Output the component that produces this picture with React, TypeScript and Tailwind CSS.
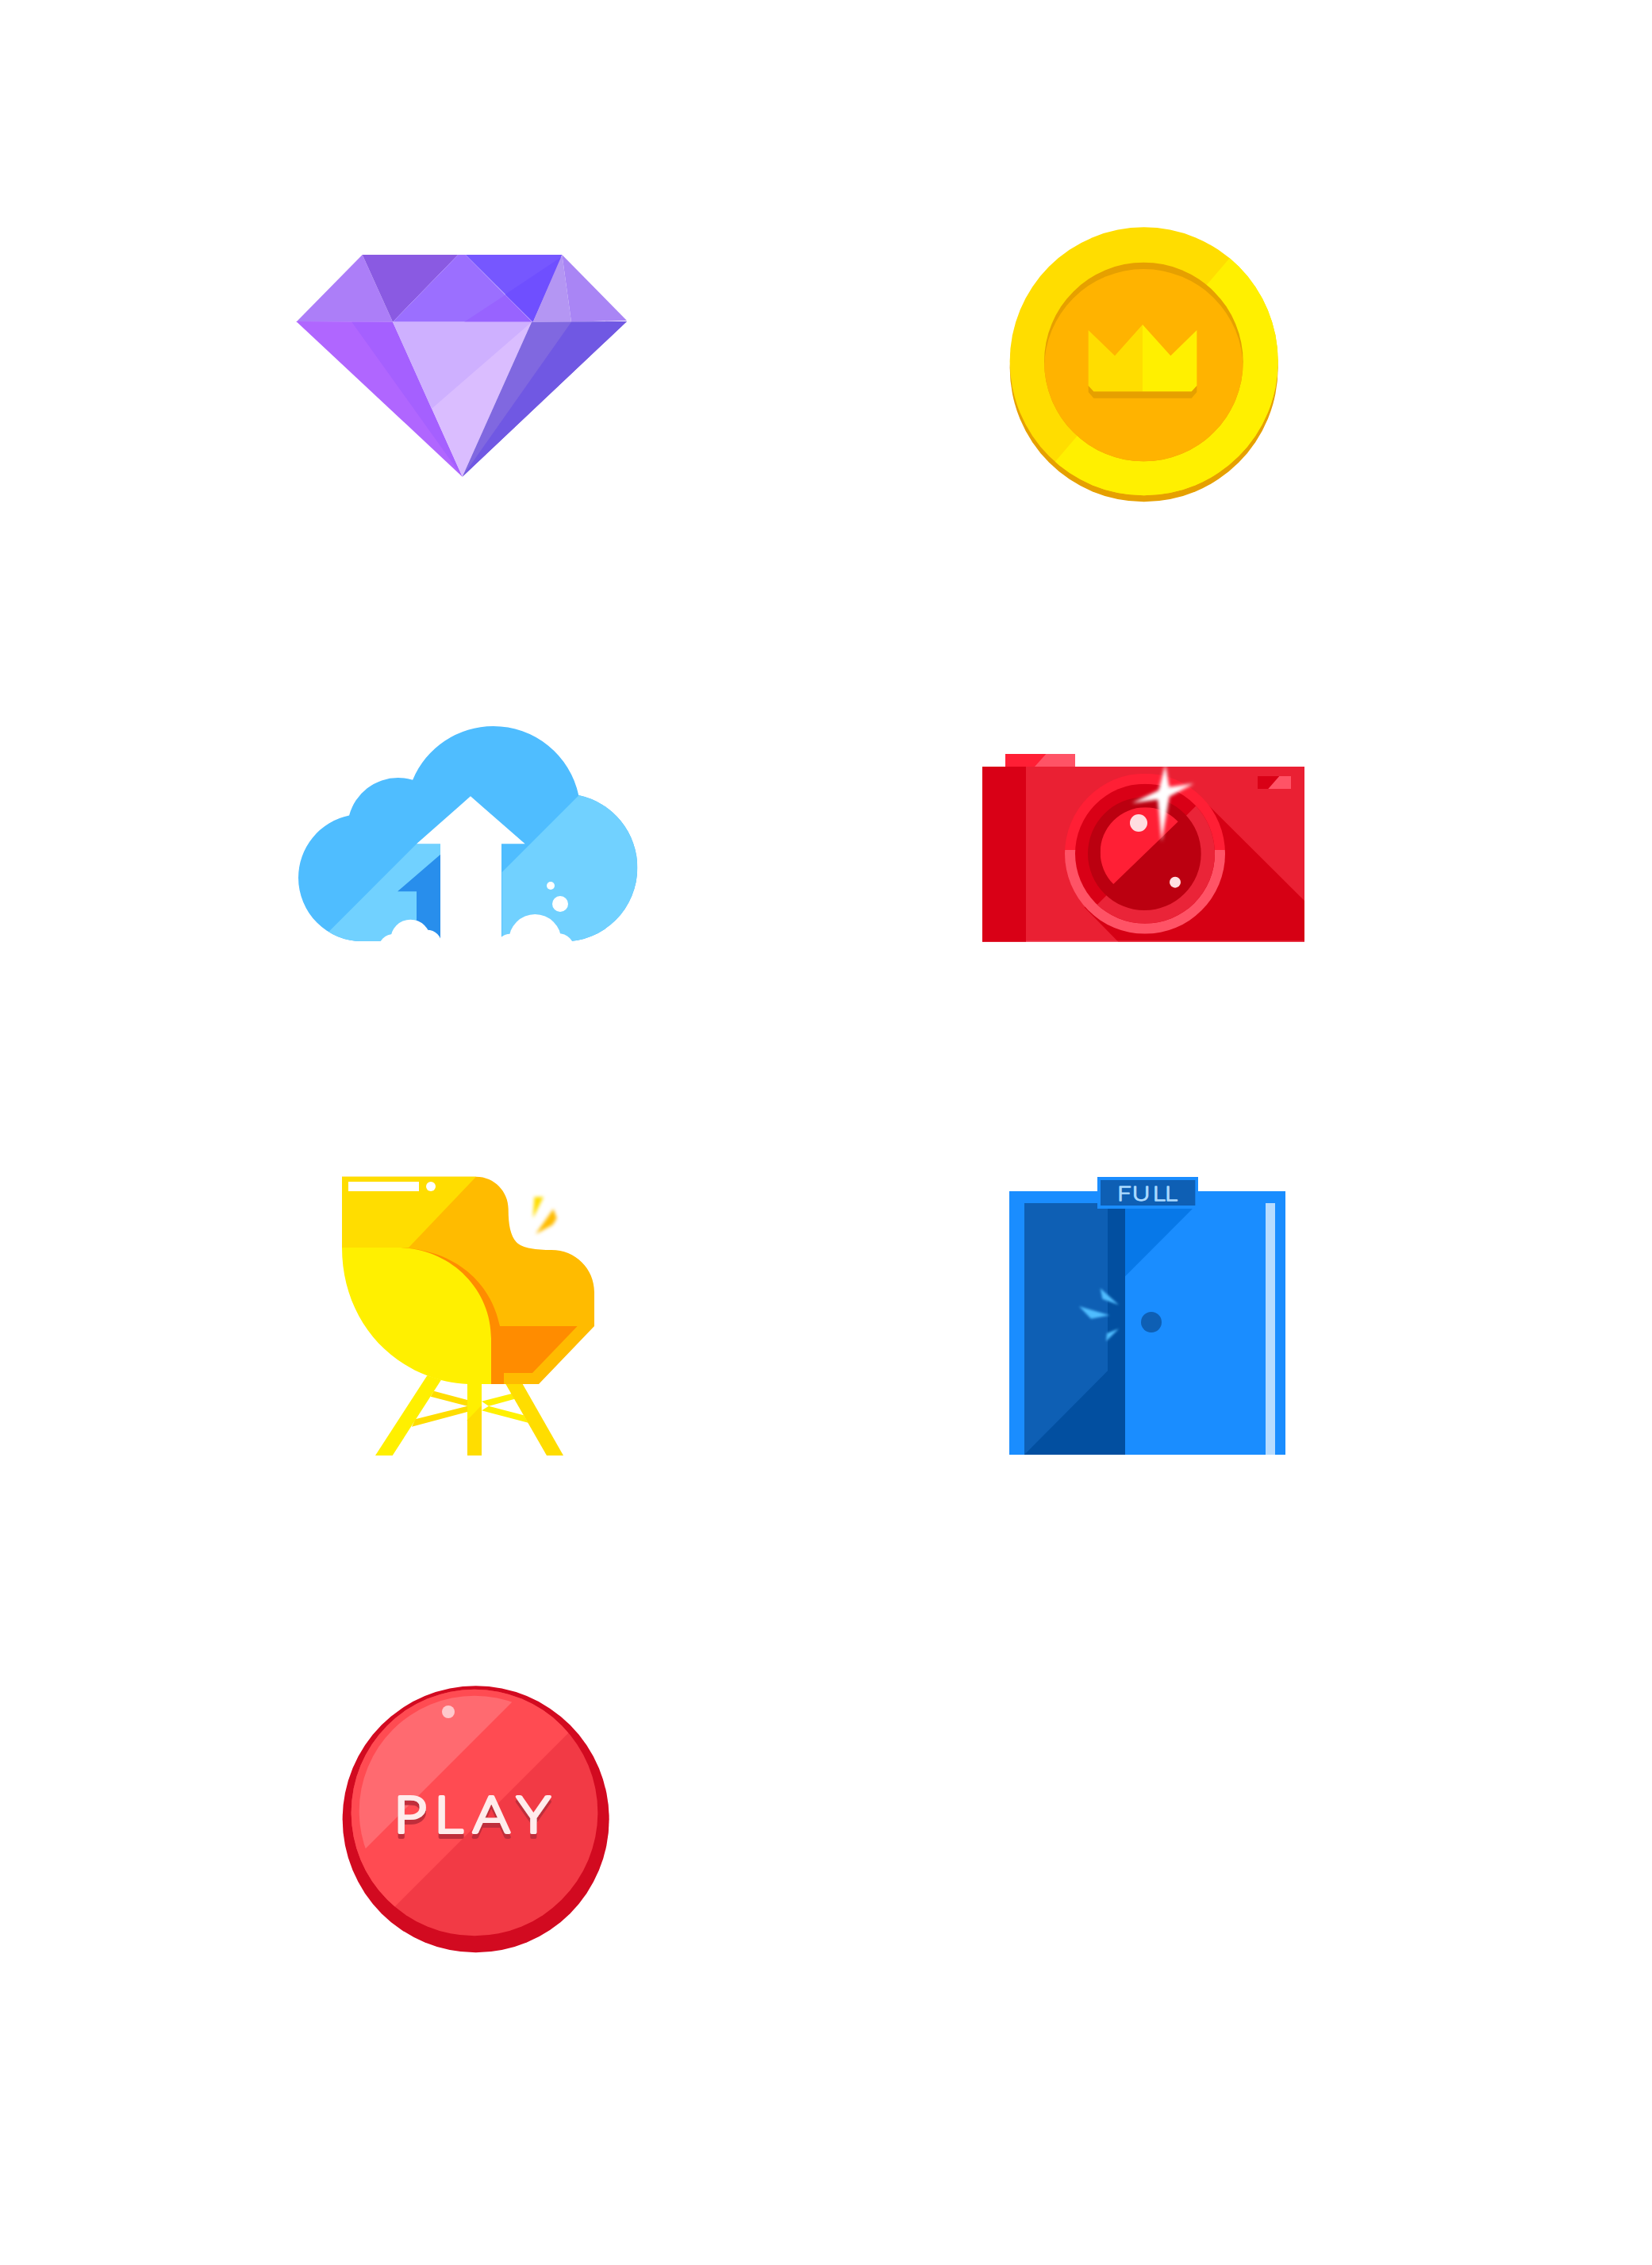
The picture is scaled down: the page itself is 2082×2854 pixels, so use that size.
// Flat game icons. Each svg's viewBox is 3x its rendered size.

function Diamond() {
  return (
    <svg viewBox="0 0 1440 1020" className="block h-[340px] w-[480px]">
      <polygon points="350,93 465,347 100,347" fill="#ac7ef8" />
      <polygon points="350,93 712,93 465,347" fill="#8a5ae2" />
      <polygon points="740,93 1105,93 995,347" fill="#7657ff" />
      <polygon points="465,347 712,93 740,93 992,347" fill="#9b6fff" />
      <polygon points="735,347 890,245 992,347" fill="#9863ff" />
      <polygon points="890,243 1105,100 995,347" fill="#6f4fff" />
      <polygon points="1105,93 1140,347 995,347" fill="#b496f3" />
      <polygon points="1105,93 1350,342 1140,347" fill="#a985f5" />
      <polygon points="100,345 465,347 728,932" fill="#b066ff" />
      <polygon points="310,347 465,347 728,932" fill="#a560ff" />
      <polygon points="465,347 990,347 728,932" fill="#dabdff" />
      <polygon points="465,347 990,347 612,675" fill="#ceb0ff" />
      <polygon points="990,347 1350,345 728,932" fill="#8068e0" />
      <polygon points="1140,347 1350,345 728,932" fill="#7058e3" />
    </svg>
  );
}

function Coin() {
  return (
    <svg viewBox="0 0 1200 1200" className="block h-[400px] w-[400px]">
      <defs>
        <clipPath id="coin-face">
          <circle cx="605" cy="586" r="507" />
        </clipPath>
        <clipPath id="coin-inner">
          <circle cx="604" cy="588" r="376" />
        </clipPath>
      </defs>
      <circle cx="605" cy="610" r="507" fill="#e6a000" />
      <circle cx="605" cy="586" r="507" fill="#ffdd00" />
      <polygon clipPath="url(#coin-face)" points="1028,80 1200,80 1200,1100 154,1100" fill="#fff000" />
      <circle cx="604" cy="588" r="376" fill="#e6a000" />
      <circle clipPath="url(#coin-inner)" cx="604" cy="613" r="376" fill="#ffb300" />
      <polygon points="395,678 415,700 785,700 805,678 805,702 785,725 415,725 395,702" fill="#e6a000" />
      <polygon points="395,468 495,565 600,447 600,700 415,700 395,678" fill="#ffdd00" />
      <polygon points="600,447 706,565 805,468 805,678 785,700 600,700" fill="#fff000" />
    </svg>
  );
}

function CloudShapes() {
  return (
    <>
      <circle cx="815" cy="405" r="330" />
      <circle cx="455" cy="461" r="191" />
      <circle cx="318" cy="648" r="240" />
      <circle cx="1080" cy="610" r="280" />
      <rect x="318" y="400" width="762" height="488" />
    </>
  );
}

function CloudUpload() {
  return (
    <svg viewBox="0 0 1440 960" className="block h-[320px] w-[480px]">
      <defs>
        <clipPath id="cloud-body">
          <CloudShapes />
        </clipPath>
      </defs>
      <g clipPath="url(#cloud-body)">
        <rect width="1440" height="888" fill="#4fbdff" />
        <polygon points="1175,300 848,627 848,960 1440,960 1440,300" fill="#71d1ff" />
        <polygon points="525,520 615,520 615,960 85,960" fill="#71d1ff" />
        <polygon points="615,560 453,700 525,700 525,888 615,888" fill="#288eec" />
      </g>
      <polygon points="729,340 935,520 846,520 846,960 615,960 615,520 525,520" fill="#fff" />
      <g fill="#fff">
        <circle cx="502" cy="881" r="75" />
        <circle cx="440" cy="920" r="60" />
        <circle cx="565" cy="900" r="55" />
        <circle cx="973" cy="885" r="99" />
        <circle cx="880" cy="915" r="55" />
        <circle cx="1060" cy="920" r="62" />
        <circle cx="1032" cy="678" r="15" />
        <circle cx="1068" cy="747" r="30" />
      </g>
    </svg>
  );
}

function Camera() {
  return (
    <svg viewBox="0 0 1380 840" className="block h-[280px] w-[460px]">
      <defs>
        <clipPath id="lens-outer">
          <circle cx="699" cy="437" r="303" />
        </clipPath>
        <clipPath id="lens-ring">
          <circle cx="699" cy="437" r="264" />
        </clipPath>
        <clipPath id="lens-core">
          <circle cx="700" cy="432" r="170" />
        </clipPath>
        <filter id="camera-blur" x="-50%" y="-50%" width="200%" height="200%">
          <feGaussianBlur stdDeviation="6" />
        </filter>
      </defs>
      <rect x="171" y="60" width="264" height="48" fill="#ff1f35" />
      <polygon points="325,60 435,60 435,108 282,108" fill="#ff5366" />
      <rect x="84" y="108" width="1218" height="662" fill="#ea2033" />
      <rect x="84" y="108" width="165" height="662" fill="#d90016" />
      <polygon points="940,255 1302,615 1302,770 598,770 470,640" fill="#d60014" />
      <rect x="249" y="767" width="1053" height="3" fill="#f25060" />
      <rect x="1125" y="144" width="126" height="48" fill="#d90016" />
      <polygon points="1207,144 1251,144 1251,192 1165,192" fill="#ff5366" />
      <g clipPath="url(#lens-outer)">
        <rect x="396" y="134" width="606" height="289" fill="#ff1f35" />
        <rect x="396" y="423" width="606" height="317" fill="#ff5366" />
      </g>
      <g clipPath="url(#lens-ring)">
        <rect x="435" y="173" width="528" height="528" fill="#d90016" />
        <polygon points="963,185 963,701 447,701" fill="#ea2438" />
      </g>
      <circle cx="697" cy="437" r="214" fill="#bb0010" />
      <polygon clipPath="url(#lens-core)" points="530,262 880,262 530,600" fill="#ff1f35" />
      <circle cx="675" cy="321" r="33" fill="#ffdde0" />
      <circle cx="813" cy="545" r="21" fill="#ffe0e3" />
      <g filter="url(#camera-blur)" fill="#fff">
        <polygon points="776,100 794,205 762,392 746,215" />
        <polygon points="650,246 770,188 884,172 778,228" />
      </g>
    </svg>
  );
}

function Chair() {
  return (
    <svg viewBox="0 0 1080 1200" className="block h-[400px] w-[360px]">
      <defs>
        <filter id="chair-blur" x="-50%" y="-50%" width="200%" height="200%">
          <feGaussianBlur stdDeviation="6" />
        </filter>
      </defs>
      <polygon points="410,878 537,912 537,935 398,899" fill="#ffdd00" />
      <polygon points="537,935 537,957 327,1013 340,985" fill="#ffdd00" />
      <polygon points="591,917 705,888 716,908 618,935" fill="#fff000" />
      <polygon points="618,935 750,970 767,998 591,952" fill="#fff000" />
      <polygon points="385,820 438,836 254,1122 189,1122" fill="#fff000" />
      <polygon points="682,852 746,852 900,1122 837,1122" fill="#ffdd00" />
      <rect x="537" y="840" width="54" height="282" fill="#fff000" />
      <polygon points="537,988 591,932 591,1122 537,1122" fill="#ffdd00" />
      <path
        d="M63,68 L570,68 C640,68 692,125 692,190 C692,250 700,290 722,315 C745,340 800,345 855,345 C945,345 1017,415 1017,505 L1017,633 L807,852 L560,852 L300,500 L63,336 Z"
        fill="#ffbb00"
      />
      <polygon points="63,68 570,68 315,336 63,336" fill="#ffdd00" />
      <path
        d="M270,336 C480,340 625,460 660,633 L953,633 L783,810 L675,810 L675,852 L600,852 L600,600 Z"
        fill="#ff8c00"
      />
      <path
        d="M63,336 L270,336 C470,336 627,490 627,680 L627,852 L540,852 C480,850 430,838 385,820 C190,745 63,560 63,336 Z"
        fill="#fff000"
      />
      <rect x="87" y="87" width="267" height="36" fill="#fff" />
      <circle cx="399" cy="105" r="18" fill="#fff" />
      <g filter="url(#chair-blur)">
        <polygon points="790,145 825,145 785,225" fill="#ffdd00" />
        <polygon points="862,190 875,225 860,250 795,285" fill="#ffbb00" />
      </g>
    </svg>
  );
}

function Door() {
  return (
    <svg viewBox="0 0 1200 1200" className="block h-[400px] w-[400px]">
      <defs>
        <filter id="door-blur" x="-50%" y="-50%" width="200%" height="200%">
          <feGaussianBlur stdDeviation="5" />
        </filter>
      </defs>
      <rect x="66" y="123" width="1044" height="996" fill="#1a8dff" />
      <rect x="123" y="168" width="381" height="951" fill="#0e5fb4" />
      <polygon points="123,1119 438,802 438,168 504,168 504,1119" fill="#024fa0" />
      <polygon points="504,180 768,180 504,445" fill="#0778e8" />
      <rect x="1035" y="168" width="36" height="951" fill="#b8dcff" />
      <circle cx="603" cy="618" r="39" fill="#0e5fb4" />
      <g filter="url(#door-blur)" fill="#4fbdff">
        <polygon points="410,490 480,553 418,530" />
        <polygon points="330,558 445,592 375,605" />
        <polygon points="480,643 432,690 435,660" />
      </g>
      <rect x="399" y="69" width="381" height="120" fill="#1a8dff" />
      <rect x="411" y="81" width="358" height="96" fill="#0e5fb4" />
      <text
        x="395 442 507 545"
        y="158"
        transform="scale(1.2 1)"
        fontFamily="Lato, sans-serif"
        fontWeight="300"
        fontSize="78"
        fill="#a8d8ff"
        stroke="#a8d8ff"
        strokeWidth="4"
        strokeLinejoin="round"
      >
        FULL
      </text>
    </svg>
  );
}

function PlayButton() {
  return (
    <svg viewBox="0 0 1140 1140" className="block h-[380px] w-[380px]">
      <defs>
        <clipPath id="play-face">
          <circle cx="564" cy="552" r="466" />
        </clipPath>
        <clipPath id="play-shine">
          <circle cx="564" cy="546" r="436" />
        </clipPath>
        <filter id="play-shadow" x="-10%" y="-20%" width="120%" height="150%">
          <feDropShadow dx="0" dy="18" stdDeviation="0" floodColor="#bf2e3a" />
        </filter>
      </defs>
      <circle cx="569" cy="577" r="504" fill="#d20a20" />
      <circle cx="564" cy="552" r="466" fill="#f23a45" />
      <polygon clipPath="url(#play-face)" points="0,0 1140,0 1140,30 0,1170" fill="#ff4b52" />
      <polygon clipPath="url(#play-shine)" points="0,0 840,0 0,840" fill="#ff6a70" />
      <circle cx="465" cy="171" r="24" fill="#ffc8cc" />
      <text
        x="232 368 498 646"
        y="627"
        transform="scale(1.12 1)"
        filter="url(#play-shadow)"
        fontFamily="Lato, sans-serif"
        fontWeight="300"
        fontSize="190"
        fill="#ffecec"
        stroke="#ffecec"
        strokeWidth="12"
        strokeLinejoin="round"
      >
        PLAY
      </text>
    </svg>
  );
}

export default function App() {
  return (
    <div className="h-[2854px] w-[2082px] bg-white pt-[260px]">
      <div className="flex h-[630px] items-start">
        <div className="ml-[340px] mt-[30px]">
          <Diamond />
        </div>
        <div className="ml-[420px]">
          <Coin />
        </div>
      </div>
      <div className="flex h-[570px] items-start">
        <div className="ml-[350px]">
          <CloudUpload />
        </div>
        <div className="ml-[380px] mt-[40px]">
          <Camera />
        </div>
      </div>
      <div className="flex h-[640px] items-start">
        <div className="ml-[410px]">
          <Chair />
        </div>
        <div className="ml-[480px]">
          <Door />
        </div>
      </div>
      <div className="ml-[410px]">
        <PlayButton />
      </div>
    </div>
  );
}
